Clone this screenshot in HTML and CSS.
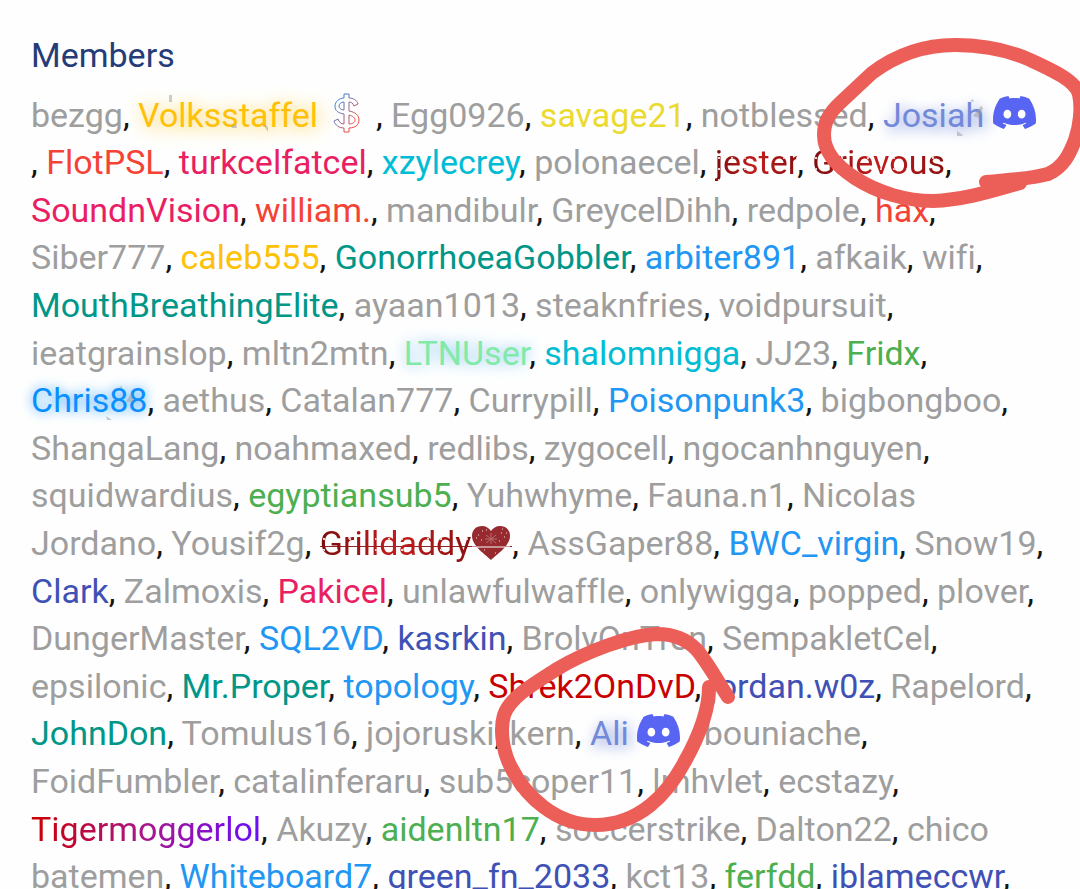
FILE: index.html
```html
<!DOCTYPE html>
<html lang="en">
<head>
    <meta charset="UTF-8">
    <meta name="viewport" content="width=device-width, initial-scale=1.0">
    <title>Members</title>
    <link rel="stylesheet" href="styles.css">
</head>
<body>
    <svg class="defs" aria-hidden="true">
        <symbol id="discord" viewBox="0 2.8 24 18.4">
            <path d="M20.317 4.3698a19.7913 19.7913 0 00-4.8851-1.5152.0741.0741 0 00-.0785.0371c-.211.3753-.4447.8648-.6083 1.2495-1.8447-.2762-3.68-.2762-5.4868 0-.1636-.3933-.4058-.8742-.6177-1.2495a.077.077 0 00-.0785-.037 19.7363 19.7363 0 00-4.8852 1.515.0699.0699 0 00-.0321.0277C.5334 9.0458-.319 13.5799.0992 18.0578a.0824.0824 0 00.0312.0561c2.0528 1.5076 4.0413 2.4228 5.9929 3.0294a.0777.0777 0 00.0842-.0276c.4616-.6304.8731-1.2952 1.226-1.9942a.076.076 0 00-.0416-.1057c-.6528-.2476-1.2743-.5495-1.8722-.8923a.077.077 0 01-.0076-.1277c.1258-.0943.2517-.1923.3718-.2914a.0743.0743 0 01.0776-.0105c3.9278 1.7933 8.18 1.7933 12.0614 0a.0739.0739 0 01.0785.0095c.1202.099.246.1981.3728.2924a.077.077 0 01-.0066.1276 12.2986 12.2986 0 01-1.873.8914.0766.0766 0 00-.0407.1067c.3604.698.7719 1.3628 1.225 1.9932a.076.076 0 00.0842.0286c1.961-.6067 3.9495-1.5219 6.0023-3.0294a.077.077 0 00.0313-.0552c.5004-5.177-.8382-9.6739-3.5485-13.6604a.061.061 0 00-.0312-.0286zM8.02 15.3312c-1.1825 0-2.1569-1.0857-2.1569-2.419 0-1.3332.9555-2.4189 2.157-2.4189 1.2108 0 2.1757 1.0952 2.1568 2.419 0 1.3332-.9555 2.4189-2.1569 2.4189zm7.9748 0c-1.1825 0-2.1569-1.0857-2.1569-2.419 0-1.3332.9554-2.4189 2.1569-2.4189 1.2108 0 2.1757 1.0952 2.1568 2.419 0 1.3332-.946 2.4189-2.1568 2.4189Z"/>
        </symbol>
    </svg>

    <main class="members">
        <h1>Members</h1>
        <p class="list">
            <a href="#">bezgg</a>,
            <a href="#" class="glow-gold">Volksstaffel</a>
            <svg class="dollar" viewBox="0 0 28 42" aria-hidden="true">
                <defs>
                    <linearGradient id="cash" x1="0" y1="0" x2="1" y2="1">
                        <stop offset="0.2" stop-color="#3b82d6"/>
                        <stop offset="0.8" stop-color="#ee4a3c"/>
                    </linearGradient>
                </defs>
                <path d="M11 2h5v4c4 0 8 2 9 6l-4 2c-1-3-3-4-5-4v9c6 1 10 4 10 9 0 5-4 8-10 8v4h-5v-4c-5 0-9-3-10-7l4-2c1 3 3 5 6 5v-10c-6-1-9-3-9-8 0-4 4-8 9-8zM11 10c-3 0-5 2-5 4s2 4 5 4zM16 23v9c4 0 6-2 6-4s-2-4-6-5z" fill="none" stroke="url(#cash)"/>
            </svg>
            ,
            <a href="#">Egg0926</a>,
            <a href="#" class="yellow">savage21</a>,
            <a href="#">notblessed</a>,
            <a href="#" class="glow-indigo">Josiah</a>
            <svg class="discord" role="img" aria-label="Discord"><use href="#discord"/></svg>
            <br>
            ,
            <a href="#" class="red">FlotPSL</a>,
            <a href="#" class="pink">turkcelfatcel</a>,
            <a href="#" class="cyan">xzylecrey</a>,
            <a href="#">polonaecel</a>,
            <a href="#" class="blood">jester</a>,
            <a href="#" class="blood">Grievous</a>,
            <a href="#" class="pink">SoundnVision</a>,
            <a href="#" class="red">william.</a>,
            <a href="#">mandibulr</a>,
            <a href="#">GreycelDihh</a>,
            <a href="#">redpole</a>,
            <a href="#" class="red">hax</a>,
            <a href="#">Siber777</a>,
            <a href="#" class="amber">caleb555</a>,
            <a href="#" class="teal">GonorrhoeaGobbler</a>,
            <a href="#" class="blue">arbiter891</a>,
            <a href="#">afkaik</a>,
            <a href="#">wifi</a>,
            <a href="#" class="teal">MouthBreathingElite</a>,
            <a href="#">ayaan1013</a>,
            <a href="#">steaknfries</a>,
            <a href="#">voidpursuit</a>,
            <a href="#">ieatgrainslop</a>,
            <a href="#">mltn2mtn</a>,
            <a href="#" class="glow-mint">LTNUser</a>,
            <a href="#" class="cyan">shalomnigga</a>,
            <a href="#">JJ23</a>,
            <a href="#" class="green">Fridx</a>,
            <a href="#" class="glow-blue">Chris88</a>,
            <a href="#">aethus</a>,
            <a href="#">Catalan777</a>,
            <a href="#">Currypill</a>,
            <a href="#" class="blue">Poisonpunk3</a>,
            <a href="#">bigbongboo</a>,
            <a href="#">ShangaLang</a>,
            <a href="#">noahmaxed</a>,
            <a href="#">redlibs</a>,
            <a href="#">zygocell</a>,
            <a href="#">ngocanhnguyen</a>,
            <a href="#">squidwardius</a>,
            <a href="#" class="green">egyptiansub5</a>,
            <a href="#">Yuhwhyme</a>,
            <a href="#">Fauna.n1</a>,
            <a href="#">Nicolas Jordano</a>,
            <a href="#">Yousif2g</a>,
            <a href="#" class="struck"><span class="blood">Grilldaddy</span><svg class="heart" viewBox="0 0 38 34" aria-hidden="true">
                <path d="M19 34C14 29 0 20 0 10 0 4 4 0 10 0c4 0 7 2 9 5 2-3 5-5 9-5 6 0 10 4 10 10 0 10-14 19-19 24z" fill="#962a2e"/>
                <path d="M19 7v11M14 9l10 8M24 9l-10 8M13 13h12" stroke="#b96a6d" stroke-width="1"/>
                <path d="M6 9h1M10 5h1M9 14h1M29 7h1M32 11h1M27 15h1M23 27h1M12 24h1M30 3h1M4 12h1M14 4h1M34 7h1" stroke="#f3dcdc" stroke-width="1"/>
                <path d="M0 21h38" stroke="#fefefe" stroke-width="1"/>
            </svg></a>,
            <a href="#">AssGaper88</a>,
            <a href="#" class="blue">BWC_virgin</a>,
            <a href="#">Snow19</a>,
            <a href="#" class="indigo">Clark</a>,
            <a href="#">Zalmoxis</a>,
            <a href="#" class="pink">Pakicel</a>,
            <a href="#">unlawfulwaffle</a>,
            <a href="#">onlywigga</a>,
            <a href="#">popped</a>,
            <a href="#">plover</a>,
            <a href="#">DungerMaster</a>,
            <a href="#" class="blue">SQL2VD</a>,
            <a href="#" class="indigo">kasrkin</a>,
            <a href="#">BrolyOnTren</a>,
            <a href="#">SempakletCel</a>,
            <a href="#">epsilonic</a>,
            <a href="#" class="teal">Mr.Proper</a>,
            <a href="#" class="blue">topology</a>,
            <a href="#" class="crimson">Shrek2OnDvD</a>,
            <a href="#" class="indigo">jordan.w0z</a>,
            <a href="#">Rapelord</a>,
            <a href="#" class="teal">JohnDon</a>,
            <a href="#">Tomulus16</a>,
            <a href="#">jojoruski</a>,
            <a href="#">kern</a>,
            <a href="#" class="glow-indigo">Ali</a>
            <svg class="discord" role="img" aria-label="Discord"><use href="#discord"/></svg>
            ,
            <a href="#">bouniache</a>,
            <a href="#">FoidFumbler</a>,
            <a href="#">catalinferaru</a>,
            <a href="#">sub5coper11</a>,
            <a href="#">lmhvlet</a>,
            <a href="#">ecstazy</a>,
            <a href="#" class="tiger">Tigermoggerlol</a>,
            <a href="#">Akuzy</a>,
            <a href="#" class="green">aidenltn17</a>,
            <a href="#">soccerstrike</a>,
            <a href="#">Dalton22</a>,
            <a href="#">chico batemen</a>,
            <a href="#" class="blue">Whiteboard7</a>,
            <a href="#" class="indigo">green_fn_2033</a>,
            <a href="#">kct13</a>,
            <a href="#" class="green">ferfdd</a>,
            <a href="#" class="indigo">iblameccwr</a>,
        </p>

        <svg class="marker" width="1080" height="889" viewBox="0 0 1080 889" aria-hidden="true">
            <!-- sparkles over the glowing names -->
            <path class="sparkle" d="M169 95h3v7h-3zM231 126l5-2 1 4h-5zM263 124l5 3v5zM970 101l3-2 1 3zM973 116l8-10 2 2-4 10zM957 131l6 4-1 1h-5zM106 416l6 4h-5zM126 402l6-10 1 10zM119 387l3-1v3z"/>
            <!-- marker circles -->
            <path d="M986 182C1010 180 1030 179 1048 174C1064 167 1070 153 1075 140C1080 126 1082 108 1079 94C1075 80 1052 70 1028 59C1005 49 980 45 955 45C918 45 892 58 872 73L841 102C828 114 824 123 824 135C824 153 838 167 855 178C878 193 907 201 933 201C965 200 995 190 1020 183"/>
            <path d="M728 697C715 677 706 660 696 649C686 639 672 634 657 634C630 635 585 652 557 669C530 686 510 698 504 715C499 732 504 755 512 769C525 795 555 825 595 825C640 825 668 793 684 763C701 733 709 708 709 687"/>
        </svg>
    </main>
</body>
</html>
```

FILE: styles.css
```css
body {
    margin: 0;
    background-color: #fefefe;
    color: #141414;
    font-family: Roboto, sans-serif;
    font-size: 34px;
    font-variant-ligatures: none;
    line-height: 1.4;
}
.defs {
    position: absolute;
    width: 0;
    height: 0;
}
.members {
    position: relative;
    box-sizing: border-box;
    height: 100vh;
    padding: 32px 31px 0;
    overflow: hidden;
}
h1 {
    margin: 0 0 12px;
    color: #253c78;
    font-size: 34px;
    font-weight: 400;
}
.list {
    margin: 0;
}
a {
    color: #9e9e9e;
    text-decoration: none;
}

/* group colours */
.yellow { color: #ebda30; }
.amber { color: #ffc107; }
.red { color: #f44336; }
.pink { color: #e91e63; }
.cyan { color: #00bcd4; }
.teal { color: #009688; }
.green { color: #4caf50; }
.blue { color: #2196f3; }
.indigo { color: #3f51b5; }
.crimson { color: #c80000; }
.blood, .tiger {
    color: transparent;
    background-image: linear-gradient(90deg, #7d0d0d, #c41c1c 50%, #8a1010);
    -webkit-background-clip: text;
    background-clip: text;
}
.blood {
    background-image:
        radial-gradient(circle at 4px 5px, #f0d0d0 1px, transparent 1px),
        linear-gradient(90deg, #7d0d0d, #c41c1c 50%, #8a1010);
    background-size: 13px 11px, 100% 100%;
}
.tiger {
    background-image: linear-gradient(90deg, #cc0000, #a8168c 50%, #6a0cff);
}

.glow-gold {
    color: #ffc107;
    text-shadow: 2px 2px 18px #ffc936;
}
.glow-indigo {
    color: #7289da;
    text-shadow: 3px 3px 14px #7289da;
}
.glow-mint {
    color: #82eaa8;
    text-shadow: 0 0 14px #7cc0f0;
}
.glow-blue {
    color: #0a8fff;
    text-shadow: 0 0 12px #2b9dff;
}
.struck {
    background: linear-gradient(#8f2528, #8f2528) 0 60% / 100% 1px no-repeat;
}

.dollar {
    width: 28px;
    height: 42px;
    margin: 0 7px 0 6px;
    vertical-align: -7px;
}
.discord {
    width: 43px;
    height: 33px;
    fill: #5865f2;
    vertical-align: -2px;
}
.heart {
    width: 38px;
    height: 34px;
    margin: 0 2px 0 1px;
    vertical-align: -5px;
}

.marker {
    position: absolute;
    top: 0;
    left: 0;
    fill: none;
    stroke: #ec5f59;
    stroke-width: 14;
    stroke-linecap: round;
    stroke-linejoin: round;
    pointer-events: none;
}
.sparkle {
    fill: #9a9a9a;
    stroke: none;
    opacity: 0.5;
}
```
